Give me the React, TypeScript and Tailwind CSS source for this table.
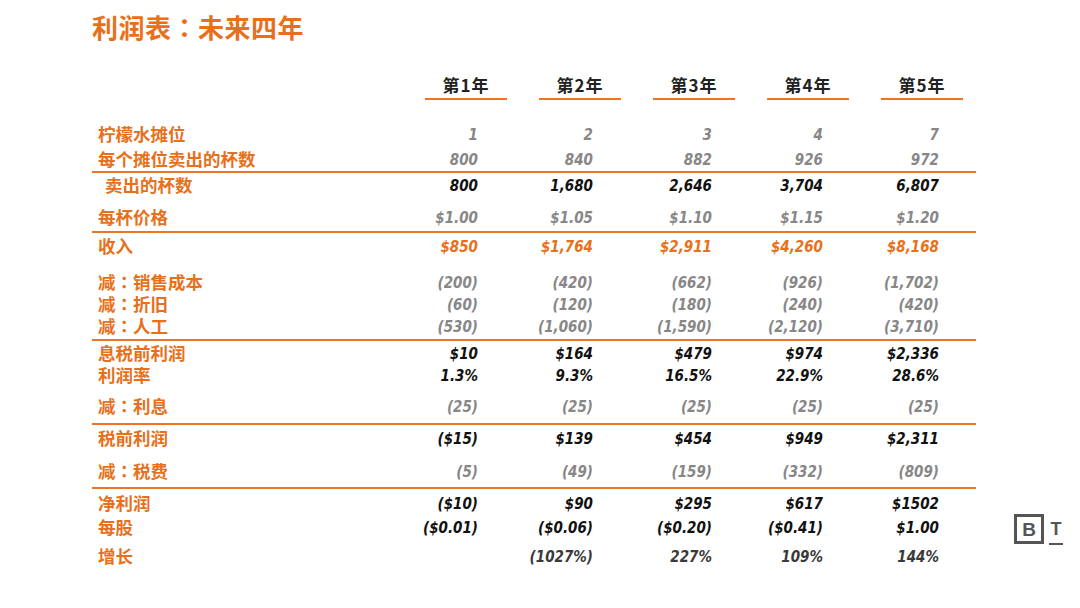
import React from "react";

const ORANGE = "text-[#e8701a]";
const cjk = { fontFamily: '"Noto Sans CJK SC", "Noto Sans", sans-serif' };
const num = { fontFamily: '"DejaVu Sans Condensed", "DejaVu Sans", sans-serif' };

type Tone = "gray" | "black" | "orange" | "dark";

const toneClass: Record<Tone, string> = {
  gray: "text-[#878787]",
  black: "text-[#111111]",
  orange: "text-[#e8701a]",
  dark: "text-[#3a3a3a]",
};

function Colon() {
  return (
    <span className="leading-none" style={{ fontFamily: '"Noto Sans CJK TC", sans-serif' }}>
      ：
    </span>
  );
}

function Label({ text }: { text: string }) {
  if (text.startsWith("减：")) {
    return (
      <>
        减<Colon />
        {text.slice(2)}
      </>
    );
  }
  return <>{text}</>;
}

function Row({
  label,
  values,
  tone,
  h,
  indent = false,
  extra = "",
}: {
  label: string;
  values: string[];
  tone: Tone;
  h: string;
  indent?: boolean;
  extra?: string;
}) {
  return (
    <div className={`grid grid-cols-[280px_106px_115px_119px_111px_116px] items-center ${h} ${extra}`}>
      <div
        className={`${indent ? "pl-[13px]" : "pl-[6px]"} ${ORANGE} text-[17.5px] font-bold leading-[18px] whitespace-nowrap`}
        style={cjk}
      >
        <Label text={label} />
      </div>
      {values.map((v, i) => (
        <div
          key={i}
          className={`mt-[2px] text-right text-[15px] font-bold italic leading-[16px] font-stretch-condensed whitespace-nowrap ${toneClass[tone]}`}
          style={num}
        >
          {v}
        </div>
      ))}
    </div>
  );
}

function Line() {
  return <div className="h-[2px] w-[884px] bg-[#ec7422]" />;
}

export default function App() {
  return (
    <div className="relative w-[1080px] h-[608px] bg-white overflow-hidden">
      <div className="pl-[92px] pt-[11px]">
        <h1
          className={`${ORANGE} text-[26px] font-bold leading-[32px] tracking-[0.5px]`}
          style={cjk}
        >
          利润表<Colon />未来四年
        </h1>

        <div className="flex gap-[32px] pl-[333px] mt-[33px]">
          {["第1年", "第2年", "第3年", "第4年", "第5年"].map((y) => (
            <div key={y} className="w-[82px] flex flex-col items-center">
              <div
                className="text-[17px] font-bold text-[#222222] leading-[18px] h-[20px] tracking-[1px]"
                style={cjk}
              >
                {y}
              </div>
              <div className="mt-[2px] h-[2px] w-[82px] bg-[#ec7422]" />
            </div>
          ))}
        </div>

        <div className="w-[884px]">
          <div className="pt-[21px]">
            <Row label="柠檬水摊位" values={["1", "2", "3", "4", "7"]} tone="gray" h="h-[25px]" />
            <Row label="每个摊位卖出的杯数" values={["800", "840", "882", "926", "972"]} tone="gray" h="h-[25px]" />
          </div>
          <Line />
          <Row label="卖出的杯数" indent values={["800", "1,680", "2,646", "3,704", "6,807"]} tone="black" h="h-[24px]" />
          <Row label="每杯价格" values={["$1.00", "$1.05", "$1.10", "$1.15", "$1.20"]} tone="gray" h="h-[28px]" extra="mt-[6px]" />
          <Line />
          <Row label="收入" values={["$850", "$1,764", "$2,911", "$4,260", "$8,168"]} tone="orange" h="h-[26px]" />
          <div className="mt-[12px] pb-[2px]">
            <Row label="减：销售成本" values={["(200)", "(420)", "(662)", "(926)", "(1,702)"]} tone="gray" h="h-[22px]" />
            <Row label="减：折旧" values={["(60)", "(120)", "(180)", "(240)", "(420)"]} tone="gray" h="h-[22px]" />
            <Row label="减：人工" values={["(530)", "(1,060)", "(1,590)", "(2,120)", "(3,710)"]} tone="gray" h="h-[22px]" />
          </div>
          <Line />
          <Row label="息税前利润" values={["$10", "$164", "$479", "$974", "$2,336"]} tone="black" h="h-[24px]" />
          <Row label="利润率" values={["1.3%", "9.3%", "16.5%", "22.9%", "28.6%"]} tone="black" h="h-[20px]" />
          <Row label="减：利息" values={["(25)", "(25)", "(25)", "(25)", "(25)"]} tone="gray" h="h-[24px]" extra="mt-[9px] mb-[5px]" />
          <Line />
          <Row label="税前利润" values={["($15)", "$139", "$454", "$949", "$2,311"]} tone="black" h="h-[26px]" />
          <Row label="减：税费" values={["(5)", "(49)", "(159)", "(332)", "(809)"]} tone="gray" h="h-[24px]" extra="mt-[8px] mb-[4px]" />
          <Line />
          <Row label="净利润" values={["($10)", "$90", "$295", "$617", "$1502"]} tone="black" h="h-[28px]" />
          <Row label="每股" values={["($0.01)", "($0.06)", "($0.20)", "($0.41)", "$1.00"]} tone="black" h="h-[20px]" />
          <Row label="增长" values={["", "(1027%)", "227%", "109%", "144%"]} tone="dark" h="h-[22px]" extra="mt-[8px]" />
        </div>
      </div>

      <div className="absolute left-[1014px] top-[514px] flex items-start gap-[5px] text-[#555555]">
        <div
          className="w-[30px] h-[30px] border-[3px] border-[#555555] flex items-center justify-center text-[19px] font-bold leading-none"
          style={{ fontFamily: '"Liberation Sans", Arial, sans-serif' }}
        >
          B
        </div>
        <div className="flex flex-col items-center pt-[8px]">
          <div
            className="text-[18px] font-bold leading-[15px]"
            style={{ fontFamily: '"Liberation Sans", Arial, sans-serif' }}
          >
            T
          </div>
          <div className="mt-[6px] h-[2px] w-[14px] bg-[#555555]" />
        </div>
      </div>
    </div>
  );
}
